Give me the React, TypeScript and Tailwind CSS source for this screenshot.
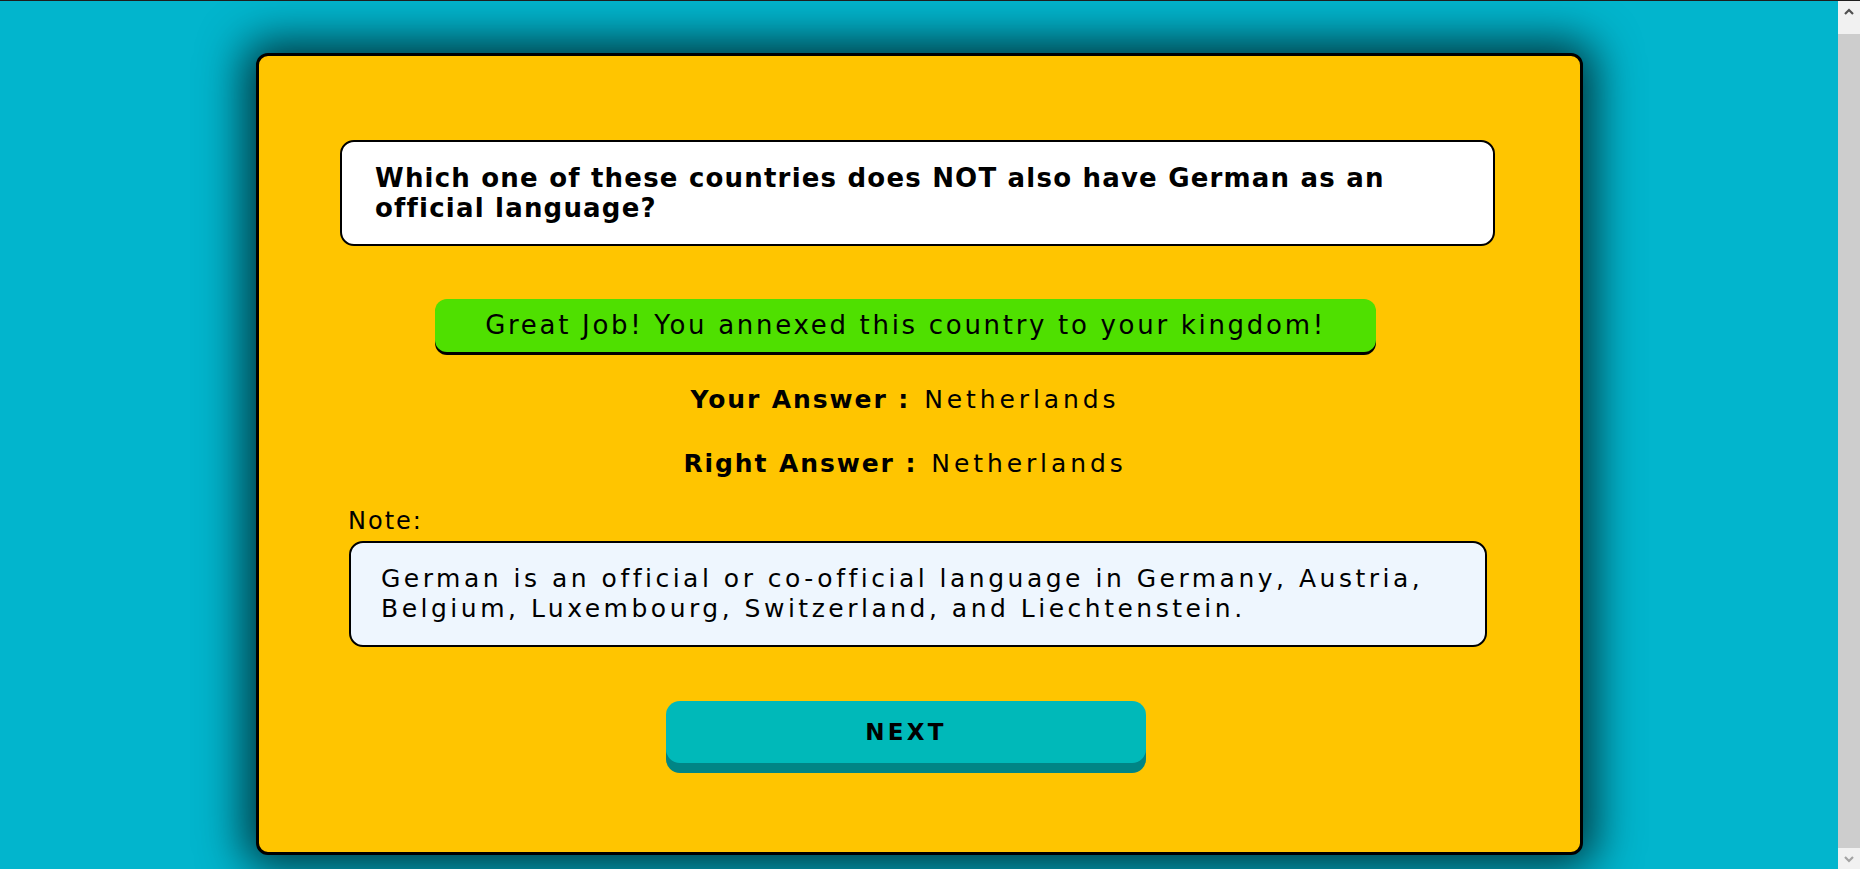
export default function App() {
  return (
    <div className="h-[869px] overflow-hidden flex border-t border-[#1e1e1e] font-['DejaVu_Sans',sans-serif] text-black">
      <main className="flex-1 bg-[#02b5cd] pt-[52px]">
        <div className="ml-[256px] w-[1327px] h-[802px] bg-[#ffc500] border-[3px] border-black rounded-[12px] shadow-[0_0_45px_12px_rgba(0,0,0,0.7)] flex flex-col items-start">
          {/* question */}
          <div className="mt-[84px] ml-[81px] w-[1155px] h-[106px] bg-white border-2 border-black rounded-[14px] px-[33px] pt-[21px]">
            <p className="text-[26px] leading-[30px] font-bold tracking-[1.2px]">
              Which one of these countries does NOT also have German as an official language?
            </p>
          </div>

          {/* result banner */}
          <div className="mt-[53px] ml-[176px] w-[941px] h-[53px] bg-[#4fe000] rounded-[12px] shadow-[0_3px_0_#000] flex items-center justify-center">
            <span className="text-[26px] tracking-[2.7px]">Great Job! You annexed this country to your kingdom!</span>
          </div>

          {/* answers */}
          <div className="mt-[33px] w-[1292px] flex flex-col items-center gap-[34px] text-[25px] leading-[30px]">
            <div>
              <span className="font-bold tracking-[1.9px]">Your Answer :</span>
              <span className="ml-[14px] tracking-[3.9px]">Netherlands</span>
            </div>
            <div>
              <span className="font-bold tracking-[1.9px]">Right Answer :</span>
              <span className="ml-[14px] tracking-[3.9px]">Netherlands</span>
            </div>
          </div>

          {/* note */}
          <div className="mt-[28px] ml-[89px] text-[24px] leading-[28px] tracking-[2px]">Note:</div>
          <div className="mt-[6px] ml-[90px] w-[1138px] h-[106px] bg-[#eef6fe] border-2 border-black rounded-[14px] px-[30px] pt-[21px]">
            <p className="text-[25px] leading-[30px] tracking-[3.5px]">
              German is an official or co-official language in Germany, Austria, Belgium, Luxembourg, Switzerland, and Liechtenstein.
            </p>
          </div>

          {/* next */}
          <button className="mt-[54px] ml-[407px] w-[480px] h-[62px] bg-[#00b9b9] rounded-[14px] shadow-[0_10px_0_#008585] text-[23px] font-bold tracking-[3.3px]">
            NEXT
          </button>
        </div>
      </main>

      {/* scrollbar */}
      <aside className="w-[22px] bg-[#f1f1f1] flex flex-col">
        <div className="h-[22px] flex items-center justify-center">
          <svg width="10" height="8" viewBox="0 0 10 8">
            <path d="M1 6 L5 2 L9 6" fill="none" stroke="#505050" strokeWidth="2.2" />
          </svg>
        </div>
        <div className="mt-[11px] flex-1 bg-[#cdcdcd]" />
        <div className="h-[21px] flex items-center justify-center">
          <svg width="10" height="8" viewBox="0 0 10 8">
            <path d="M1 2 L5 6 L9 2" fill="none" stroke="#a3a3a3" strokeWidth="2.2" />
          </svg>
        </div>
      </aside>
    </div>
  );
}
